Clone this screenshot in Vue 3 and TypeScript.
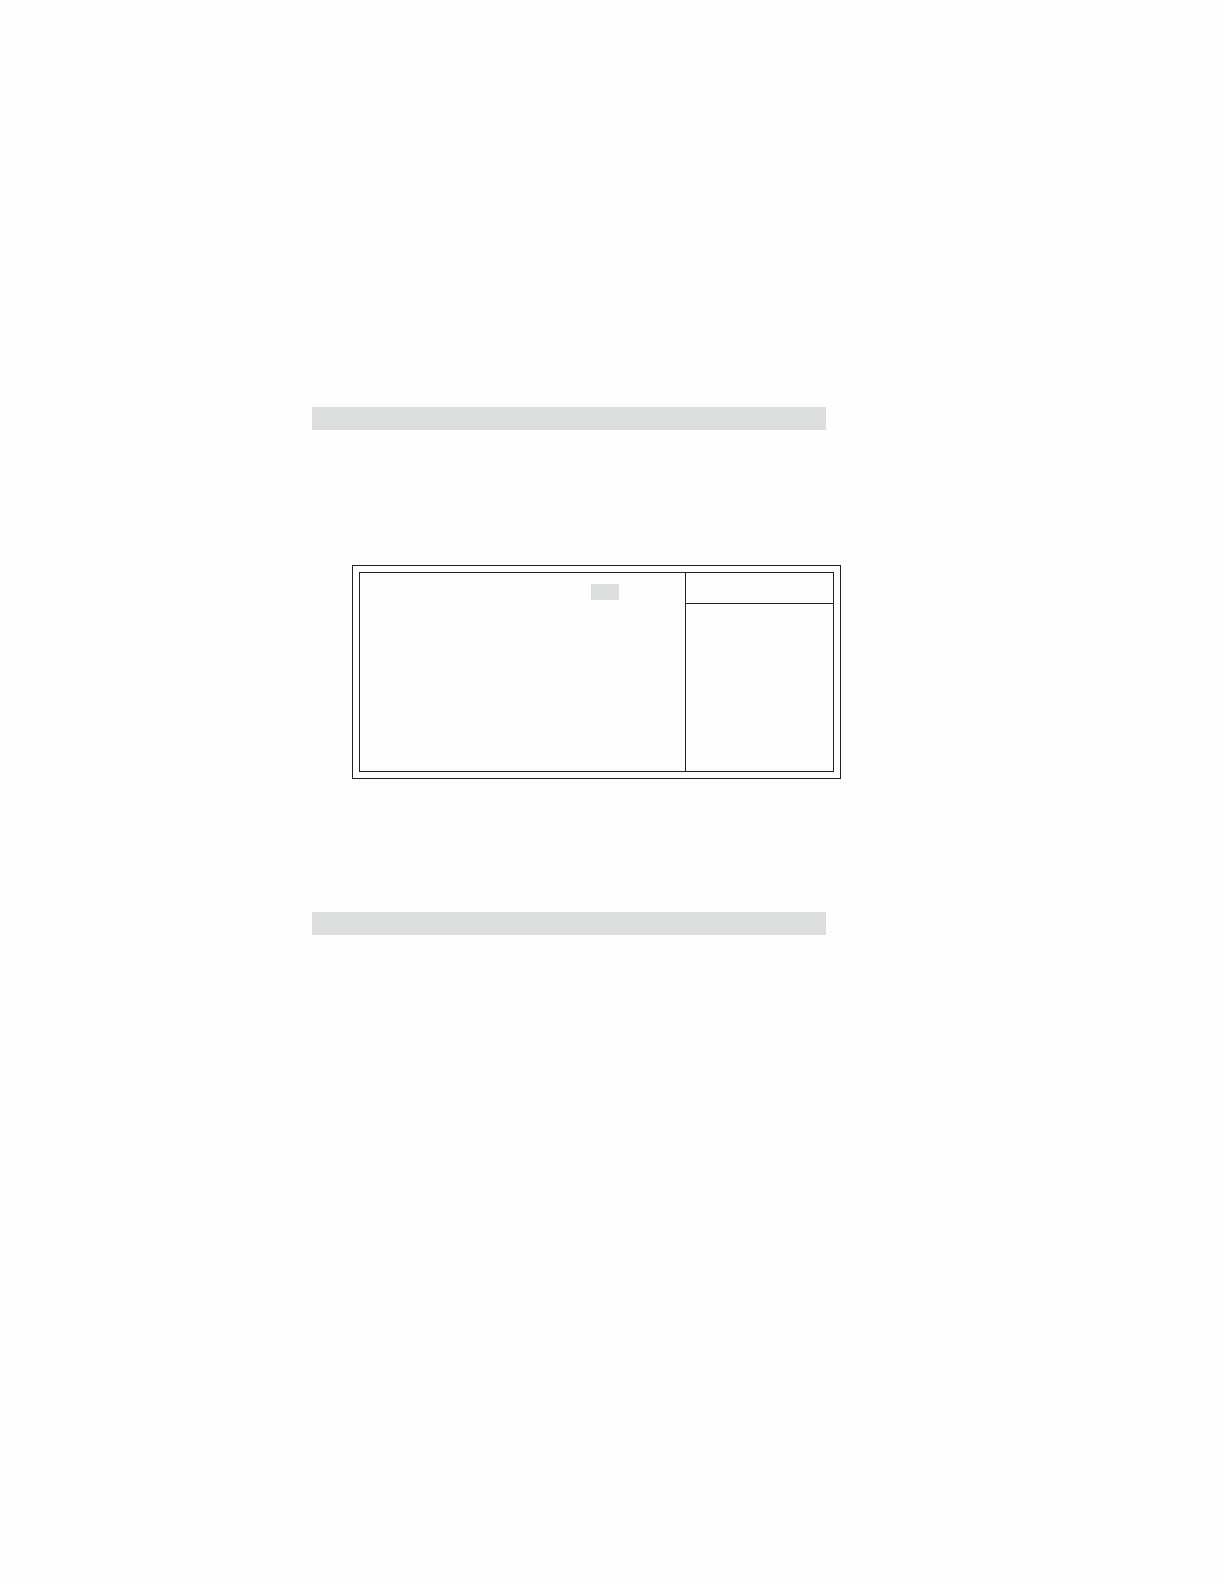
<script setup lang="ts">
</script>

<template>
  <main class="page">
    <article class="content">
      <header class="band"></header>
      <section class="screen">
        <div class="panel">
          <div class="settings">
            <span class="selection"></span>
          </div>
          <aside class="help">
            <div class="help-head"></div>
            <div class="help-body"></div>
          </aside>
        </div>
      </section>
      <footer class="band"></footer>
    </article>
  </main>
</template>

<style>
body {
  background: #fefefe;
}
</style>

<style scoped>
.page {
  display: grid;
  grid-template-columns: 312fr 514fr 398fr;
  box-sizing: border-box;
  min-height: 100vh;
  padding-top: 407px;
  font-family: "Liberation Sans", sans-serif;
}

.content {
  grid-column: 2;
  min-width: 0;
}

.band {
  height: 23px;
  background: #dcdddd;
}

.screen {
  margin: 135px -15px 133px 40px;
  padding: 6px;
  border: 1px solid #231f20;
}

.panel {
  display: grid;
  grid-template-columns: 325fr 148fr;
  min-height: 198px;
  border: 1px solid #231f20;
}

.settings {
  display: flex;
  justify-content: flex-end;
  align-items: flex-start;
  padding: 11px 66px;
}

.selection {
  width: 28px;
  height: 16px;
  background: #dcdddd;
}

.help {
  display: flex;
  flex-direction: column;
  border-left: 1px solid #231f20;
}

.help-head {
  height: 30px;
  border-bottom: 1px solid #231f20;
}

.help-body {
  flex: 1;
}
</style>
